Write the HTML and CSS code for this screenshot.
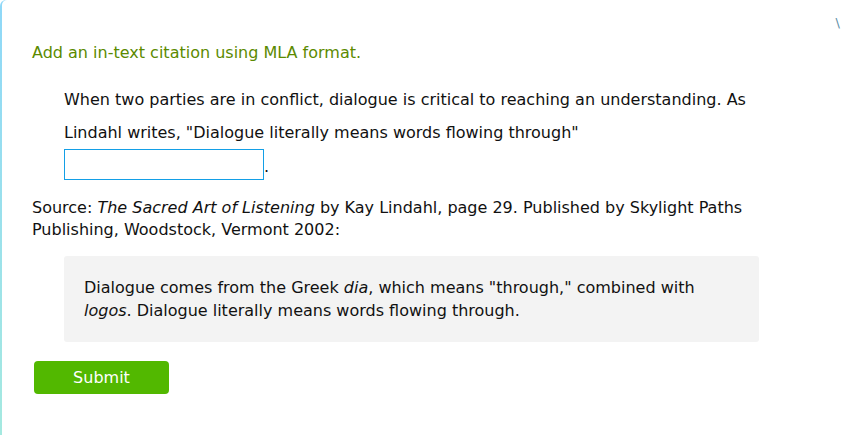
FILE: index.html
```html
<!DOCTYPE html>
<html>
<head>
<meta charset="utf-8">
<link rel="stylesheet" href="styles.css">
</head>
<body>
<div class="frame">
<div class="card">
  <span class="corner-mark">\</span>
  <p class="prompt">Add an in-text citation using MLA format.</p>
  <div class="passage">
    <p class="line">When two parties are in conflict, dialogue is critical to reaching an understanding. As Lindahl writes, "Dialogue literally means words flowing through" <input class="answer" type="text">.</p>
  </div>
  <p class="source">Source: <em>The Sacred Art of Listening</em> by Kay Lindahl, page 29. Published by Skylight Paths Publishing, Woodstock, Vermont 2002:</p>
  <div class="quote">Dialogue comes from the Greek <em>dia</em>, which means "through," combined with <em>logos</em>. Dialogue literally means words flowing through.</div>
  <button class="submit">Submit</button>
</div>
</div>
</body>
</html>
```
FILE: styles.css
```css
html, body {
  margin: 0;
  padding: 0;
  background: #fff;
}
body {
  font-family: "DejaVu Sans", Verdana, sans-serif;
  font-size: 16px;
  color: #111;
}
.frame {
  background: linear-gradient(#8fd8f8, #a5e9e0);
  padding-left: 2px;
  border-top-left-radius: 6px;
  min-height: 435px;
  box-sizing: border-box;
  display: flex;
}
.card {
  position: relative;
  flex: 1;
  background: #fff;
  border-top-left-radius: 5px;
  padding: 42px 0 0 30px;
}
.corner-mark {
  position: absolute;
  top: 15px;
  right: 1px;
  color: #5b8ea6;
  font-size: 13px;
}
.prompt {
  margin: 0;
  color: #5b8a00;
  line-height: 22px;
  width: 727px;
}
.passage {
  padding-left: 32px;
  width: 695px;
  margin-top: 19px;
}
.line {
  margin: 0;
  line-height: 33px;
}
.answer {
  width: 198px;
  height: 29px;
  box-sizing: content-box;
  padding: 0;
  margin: 0;
  border: 1px solid #139fe6;
  vertical-align: 2px;
  font: inherit;
}
.source {
  margin: 14px 0 15px;
  line-height: 22px;
  width: 727px;
}
.quote {
  margin-left: 32px;
  background: #f3f3f3;
  border-radius: 3px;
  padding: 20px;
  line-height: 23px;
  width: 655px;
}
.submit {
  display: block;
  margin: 19px 0 0 2px;
  width: 135px;
  height: 33px;
  background: #52b800;
  color: #fff;
  border: none;
  border-radius: 4px;
  font-family: inherit;
  font-size: 16px;
}
```
